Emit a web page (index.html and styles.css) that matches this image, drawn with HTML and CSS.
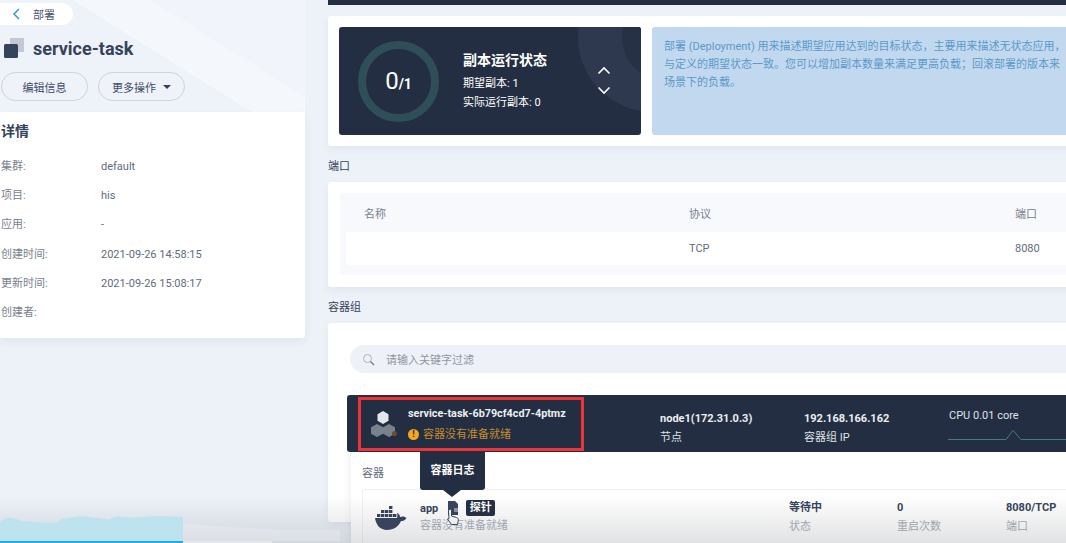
FILE: index.html
```html
<!DOCTYPE html>
<html lang="zh-CN">
<head>
	<meta charset="UTF-8">
	<title>service-task</title>
	<link rel="stylesheet" href="styles.css">
</head>
<body>
	<div class="page">

		<div class="side">
			<div class="side-head">
				<div class="back">
					<svg width="9" height="12" viewBox="0 0 9 12"><path d="M7 1 2 6l5 5" fill="none" stroke="#3d9bd0" stroke-width="1.6"/></svg>
					<span>部署</span>
				</div>
				<div class="app-title">
					<svg width="20" height="20" viewBox="0 0 20 20"><rect x="6" y="0" width="14" height="14" rx="1" fill="#c3c9d3"/><rect x="0" y="6" width="14" height="14" rx="1.5" fill="#36435c"/></svg>
					<h1>service-task</h1>
				</div>
				<div class="btns">
					<div class="btn">编辑信息</div>
					<div class="btn">更多操作<i class="caret"></i></div>
				</div>
			</div>
			<div class="detail">
				<h2>详情</h2>
				<div class="kv"><span>集群:</span><b>default</b></div>
				<div class="kv"><span>项目:</span><b>his</b></div>
				<div class="kv"><span>应用:</span><b>-</b></div>
				<div class="kv"><span>创建时间:</span><b>2021-09-26 14:58:15</b></div>
				<div class="kv"><span>更新时间:</span><b>2021-09-26 15:08:17</b></div>
				<div class="kv"><span>创建者:</span><b></b></div>
			</div>
		</div>

		<div class="main">
			<div class="topbar"></div>

			<div class="card status-card">
				<div class="replica">
					<div class="deco"></div>
					<div class="ring"><span class="big">0</span><span class="small">/1</span></div>
					<div class="replica-text">
						<h3>副本运行状态</h3>
						<p>期望副本: 1</p>
						<p>实际运行副本: 0</p>
					</div>
					<div class="arrows">
						<svg width="14" height="9" viewBox="0 0 14 9"><path d="M1.5 7.5 7 2l5.500 5.500" fill="none" stroke="#fff" stroke-width="1.6"/></svg>
						<svg width="14" height="9" viewBox="0 0 14 9"><path d="M1.500 1.500 7 7l5.500-5.500" fill="none" stroke="#fff" stroke-width="1.6"/></svg>
					</div>
				</div>
				<div class="intro">
					<p>部署 (Deployment) 用来描述期望应用达到的目标状态，主要用来描述无状态应用，</p>
					<p>与定义的期望状态一致。您可以增加副本数量来满足更高负载；回滚部署的版本来</p>
					<p>场景下的负载。</p>
				</div>
			</div>

			<div class="label">端口</div>
			<div class="card ports-card">
				<div class="ports">
					<div class="port-row port-head"><span>名称</span><span>协议</span><span>端口</span></div>
					<div class="port-row port-body"><span></span><span>TCP</span><span>8080</span></div>
				</div>
			</div>

			<div class="label label-pods">容器组</div>
			<div class="card pods-card">
				<div class="search">
					<svg width="13" height="13" viewBox="0 0 13 13"><circle cx="5.500" cy="5.500" r="4" fill="none" stroke="#a9b2bf" stroke-width="1"/><path d="m8.500 8.500 3.500 3.500" stroke="#6d7a8c" stroke-width="1.300"/></svg>
					<span>请输入关键字过滤</span>
				</div>
				<div class="pod-row">
					<div class="pod-name">
						<svg class="pod-icon" width="28" height="26" viewBox="0 0 28 26">
							<path d="M13 0l5.500 3.200v6.600L13 13 7.500 9.800V3.200z" fill="#e4e7ec"/>
							<path d="M7 13l6 3.200v6.600L7 26l-6-3.200v-6.600z" fill="#79818f"/>
							<path d="M19 13l6 3.200v6.600L19 26l-6-3.200v-6.600z" fill="#79818f"/>
							<circle cx="24.500" cy="22.500" r="2.500" fill="#6b4f22"/>
						</svg>
						<div>
							<div class="pod-title">service-task-6b79cf4cd7-4ptmz</div>
							<div class="pod-warn"><i class="warn-dot">!</i>容器没有准备就绪</div>
						</div>
					</div>
					<div class="pod-col pod-node"><b>node1(172.31.0.3)</b><span>节点</span></div>
					<div class="pod-col pod-ip"><b>192.168.166.162</b><span>容器组 IP</span></div>
					<div class="pod-cpu">
						<span>CPU 0.01 core</span>
						<svg width="118" height="14" viewBox="0 0 118 14"><path d="M0 12.500H58l7-9 8 9h45" fill="none" stroke="#3f7f7c" stroke-width="1"/></svg>
					</div>
				</div>
				<div class="containers">
					<div class="containers-label">容器</div>
					<div class="box">
						<svg class="docker" width="32" height="24" viewBox="0 0 32 24">
							<g fill="#36435c">
								<rect x="14" y="0" width="3.400" height="3"/>
								<rect x="6" y="4" width="3.400" height="3"/><rect x="10" y="4" width="3.400" height="3"/><rect x="14" y="4" width="3.400" height="3"/>
								<rect x="2" y="8" width="3.400" height="3"/><rect x="6" y="8" width="3.400" height="3"/><rect x="10" y="8" width="3.400" height="3"/><rect x="14" y="8" width="3.400" height="3"/><rect x="18" y="8" width="3.400" height="3"/>
								<path d="M0 12h22c.5-2 .5-4 0-5 1.500.5 3 2 3 4 2.500-1 5-.5 6.500 1-1.500 2.500-3.500 3-5.500 3-2 5-7 9-14 9C5 24 1 19 0 12z"/>
							</g>
						</svg>
						<div class="box-name">
							<div class="app-line"><b>app</b>
								<svg class="log-icon" width="12" height="14" viewBox="0 0 12 14"><path d="M1 0h7l3 3v11H1z" fill="#36435c"/><path d="M7 7h4v4H7z" fill="#8b95a5"/></svg>
								<span class="tag">探针</span>
							</div>
							<div class="muted">容器没有准备就绪</div>
						</div>
						<div class="box-col box-state"><b>等待中</b><span>状态</span></div>
						<div class="box-col box-restart"><b>0</b><span>重启次数</span></div>
						<div class="box-col"><b>8080/TCP</b><span>端口</span></div>
					</div>
					<div class="tooltip">容器日志</div>
					<svg class="hand" width="14" height="18" viewBox="0 0 14 18"><path d="M4 1.500c1 0 1.500.5 1.500 1.500v5l5 1.500c1.500.5 2 1.500 1.800 3L11.500 16.500h-6L1.500 11 3 10.500l-.5-7.500c0-1 .5-1.500 1.500-1.500z" fill="#fff" stroke="#36435c" stroke-width="1"/></svg>
				</div>
			</div>
		</div>
	</div>

	<!-- video player strip lying over the page -->
	<div class="player">
		<svg class="wave" width="340" height="28" viewBox="0 0 340 28" preserveAspectRatio="none">
			<path d="M183 10c30 4 80 6 110 7l47 0V28H183z" fill="#fff" opacity=".2"/>
			<path d="M0 9c5-4 8-5 12-4 5 0 6 3 12 3 10 1 22 2 32 2 7-6 14-5 20-6 8-2 12 0 20 1 8 0 9 2 14 1 5-3 8-3 13-2 12 1 20 0 33-1l27 1V28H0z" fill="#bfe2ef"/>
		</svg>
		<div class="progress"><i></i></div>
	</div>
</body>
</html>
```

FILE: styles.css
```css
* {
	box-sizing: border-box;
}

html, body {
	margin: 0;
	height: 543px;
	overflow: hidden;
}

body {
	background: #edf2f9;
	font-family: Roboto, "Noto Sans CJK SC", sans-serif;
	font-size: 12px;
	color: #36435c;
}

h1, h2, h3, p {
	margin: 0;
}

/* Left column */

.page {
	display: flex;
	width: 1066px;
	height: 543px;
	gap: 23px;
	overflow: hidden;
}

.side {
	width: 305px;
	flex-shrink: 0;
}

.side-head {
	height: 112px;
	padding: 3px 0 0 1px;
	background: linear-gradient(32deg, #eef2f9 0 52%, #f4f7fb 52% 68%, #f1f4fa 68%);
}

.back {
	display: flex;
	align-items: center;
	gap: 12px;
	width: 73px;
	height: 22px;
	padding-left: 12px;
	margin-left: -1px;
	background: #fff;
	border-radius: 0 11px 11px 0;
	color: #4a5668;
	font-size: 11px;
}

.app-title {
	display: flex;
	align-items: center;
	gap: 9px;
	height: 20px;
	margin: 13px 0 14px 3px;
}

.app-title h1 {
	position: relative;
	top: 1px;
	font-size: 18px;
	line-height: 22px;
	font-weight: 700;
	color: #36435c;
}

.btns {
	display: flex;
	gap: 10px;
}

.btn {
	display: flex;
	align-items: center;
	justify-content: center;
	gap: 7px;
	width: 87px;
	height: 29px;
	border: 1px solid #ccd3db;
	border-radius: 15px;
	background: #eff3f9;
	font-size: 11px;
	color: #404e68;
}

.caret {
	border: 4px solid transparent;
	border-top: 4px solid #36435c;
	border-bottom: 0;
}

.detail {
	height: 226px;
	padding: 10px 0 0 1px;
	background: #fff;
	border-radius: 0 0 3px 0;
	box-shadow: 0 4px 8px rgba(36, 46, 66, .06);
}

.detail h2 {
	font-size: 14px;
	line-height: 18px;
	font-weight: 700;
	margin-bottom: 12px;
}

.kv {
	display: flex;
	height: 29.200px;
	line-height: 29px;
	font-size: 11px;
	color: #5f6b7e;
}

.kv span {
	width: 100px;
	color: #79818f;
}

.kv b {
	font-weight: 400;
}

/* Right column */

.main {
	width: 1000px;
	flex-shrink: 0;
}

.topbar {
	height: 5px;
	background: #242e42;
}

.card {
	background: #fff;
	border-radius: 3px;
	box-shadow: 0 4px 8px rgba(36, 46, 66, .05);
}

.status-card {
	display: flex;
	gap: 11px;
	height: 130px;
	margin-top: 11px;
	padding: 11px;
}

.replica {
	position: relative;
	display: flex;
	align-items: center;
	width: 302px;
	height: 108px;
	padding-left: 19px;
	overflow: hidden;
	background: #242e42;
	border-radius: 3px;
	color: #fff;
	flex-shrink: 0;
}

.deco {
	position: absolute;
	left: 239px;
	top: -65px;
	width: 150px;
	height: 150px;
	border-radius: 50%;
	background: #2e3950;
}

.deco::after {
	content: "";
	position: absolute;
	left: 44px;
	top: 30px;
	width: 90px;
	height: 90px;
	border-radius: 50%;
	background: #263146;
}

.ring {
	position: relative;
	display: flex;
	align-items: baseline;
	justify-content: center;
	width: 81px;
	height: 81px;
	line-height: 65px;
	border: 8px solid #2f4f58;
	border-radius: 50%;
	flex-shrink: 0;
}

.big {
	font-size: 24px;
}

.small {
	font-size: 14px;
	font-weight: 700;
}

.replica-text {
	position: relative;
	margin-left: 24px;
	width: 122px;
	font-size: 11px;
	line-height: 19px;
}

.replica-text h3 {
	font-size: 14px;
	line-height: 20px;
	margin-bottom: 4px;
}

.arrows {
	position: relative;
	display: flex;
	flex-direction: column;
	gap: 11px;
	margin: -1px 0 0 12px;
}

.intro {
	flex: 1;
	height: 108px;
	padding: 11px 12px;
	background: #c2d8ef;
	border-radius: 3px;
	color: #5a9bc9;
	font-size: 11px;
	line-height: 18px;
	white-space: nowrap;
}

.label {
	margin-top: 12px;
	height: 24px;
	line-height: 17px;
	font-size: 11px;
	color: #36435c;
}

.ports-card {
	height: 105px;
	padding: 11px 12px 12px;
}

.ports {
	height: 82px;
	padding: 0 6px;
	background: #f7f9fc;
	border-radius: 3px;
}

.port-row {
	display: grid;
	grid-template-columns: 325px 326px 1fr;
	padding-left: 18px;
	font-size: 11px;
	color: #79818f;
	align-items: center;
}

.port-head {
	height: 39px;
}

.port-body {
	height: 33px;
	background: #fff;
	border-radius: 3px;
	color: #5f6b7e;
}

.label-pods {
	margin-top: 12px;
	height: 24px;
}

.pods-card {
	position: relative;
	height: 199px;
	padding-top: 22px;
}

.search {
	display: flex;
	align-items: center;
	gap: 11px;
	height: 28px;
	margin: 0 12px 0 22px;
	padding-left: 12px;
	background: #eef2f8;
	border-radius: 14px;
	font-size: 11px;
	color: #8e96a3;
}

.pod-row {
	position: relative;
	z-index: 2;
	display: flex;
	align-items: center;
	height: 57px;
	margin: 22px 0 0 19px;
	background: #242e42;
	border-radius: 3px;
	color: #fff;
}

.pod-name {
	display: flex;
	align-items: center;
	gap: 10px;
	width: 226px;
	height: 54px;
	margin-left: 11px;
	margin-right: 76px;
	padding-left: 9px;
	border: 3px solid #ee3338;
	flex-shrink: 0;
}

.pod-title {
	font-size: 10.800px;
	font-weight: 700;
	line-height: 18px;
	margin-bottom: 4px;
	color: #eceef1;
}

.pod-warn {
	display: flex;
	align-items: center;
	gap: 4px;
	font-size: 11px;
	line-height: 16px;
	color: #c58a2a;
}

.warn-dot {
	width: 11px;
	height: 11px;
	line-height: 11px;
	border-radius: 50%;
	background: #f5a623;
	color: #242e42;
	font-size: 9px;
	font-style: normal;
	font-weight: 700;
	text-align: center;
}

.pod-col {
	display: flex;
	flex-direction: column;
	gap: 2px;
	width: 144px;
	font-size: 11px;
	line-height: 17px;
	padding-top: 9px;
	color: #dfe2e7;
}

.pod-col b {
	font-weight: 700;
	color: #eceef1;
}

.pod-ip {
	width: 145px;
}

.pod-cpu {
	display: flex;
	flex-direction: column;
	font-size: 11px;
	line-height: 16px;
	color: #dfe2e7;
	height: 48px;
	padding-top: 8px;
}

.pod-cpu svg {
	margin-top: 3px;
	margin-left: -1px;
	display: block;
}

.containers {
	position: relative;
	height: 100px;
	margin-left: 23px;
	padding: 15px 11px 0;
	background: #fff;
	box-shadow: 0 0 8px rgba(36, 46, 66, .1);
}

.containers-label {
	height: 22px;
	line-height: 14px;
	font-size: 11px;
	color: #5f6b7e;
}

.box {
	display: flex;
	height: 80px;
	padding: 10px 0 0 12px;
	border: 1px solid #edf0f4;
	border-radius: 3px;
}

.docker {
	margin: 6px 13px 0 0;
	flex-shrink: 0;
}

.box-name {
	width: 369px;
	flex-shrink: 0;
}

.app-line {
	display: flex;
	align-items: center;
	height: 16px;
	margin-bottom: 2px;
}

.app-line b {
	font-size: 11px;
	font-weight: 700;
}

.log-icon {
	margin: 0 7px 0 9px;
}

.tag {
	width: 29px;
	height: 16px;
	line-height: 16px;
	background: #242e42;
	border-radius: 2px;
	color: #fff;
	font-size: 11px;
	font-weight: 700;
	text-align: center;
}

.muted {
	font-size: 11px;
	line-height: 16px;
	color: #a9b0bb;
}

.box-col {
	display: flex;
	flex-direction: column;
	gap: 3px;
	font-size: 11px;
	line-height: 16px;
	color: #a9b0bb;
}

.box-col b {
	color: #36435c;
	font-weight: 700;
}

.box-state {
	width: 108px;
}

.box-restart {
	width: 109px;
}

/* Tooltip and pointer over the container row */

.tooltip {
	position: absolute;
	left: 69px;
	top: -1px;
	width: 65px;
	height: 39px;
	padding-top: 12px;
	background: #242e42;
	border-radius: 0 0 3px 3px;
	color: #fff;
	font-size: 11px;
	line-height: 16px;
	font-weight: 700;
	text-align: center;
}

.tooltip::after {
	content: "";
	position: absolute;
	left: 23px;
	top: 39px;
	border: 9px solid transparent;
	border-top: 7px solid #242e42;
	border-bottom: 0;
}

.hand {
	position: absolute;
	left: 95px;
	top: 56px;
}

/* Player controls */

.player {
	position: absolute;
	left: 0;
	right: 0;
	bottom: 0;
	height: 48px;
	background: linear-gradient(rgba(70, 75, 85, 0), rgba(70, 75, 85, .16));
	pointer-events: none;
}

.wave {
	position: absolute;
	left: 0;
	bottom: 2px;
}

.progress {
	position: absolute;
	left: 0;
	bottom: 0;
	width: 272px;
	height: 2px;
	background: #e4e6e9;
}

.progress i {
	display: block;
	width: 183px;
	height: 2px;
	background: #1eaee8;
}
```
